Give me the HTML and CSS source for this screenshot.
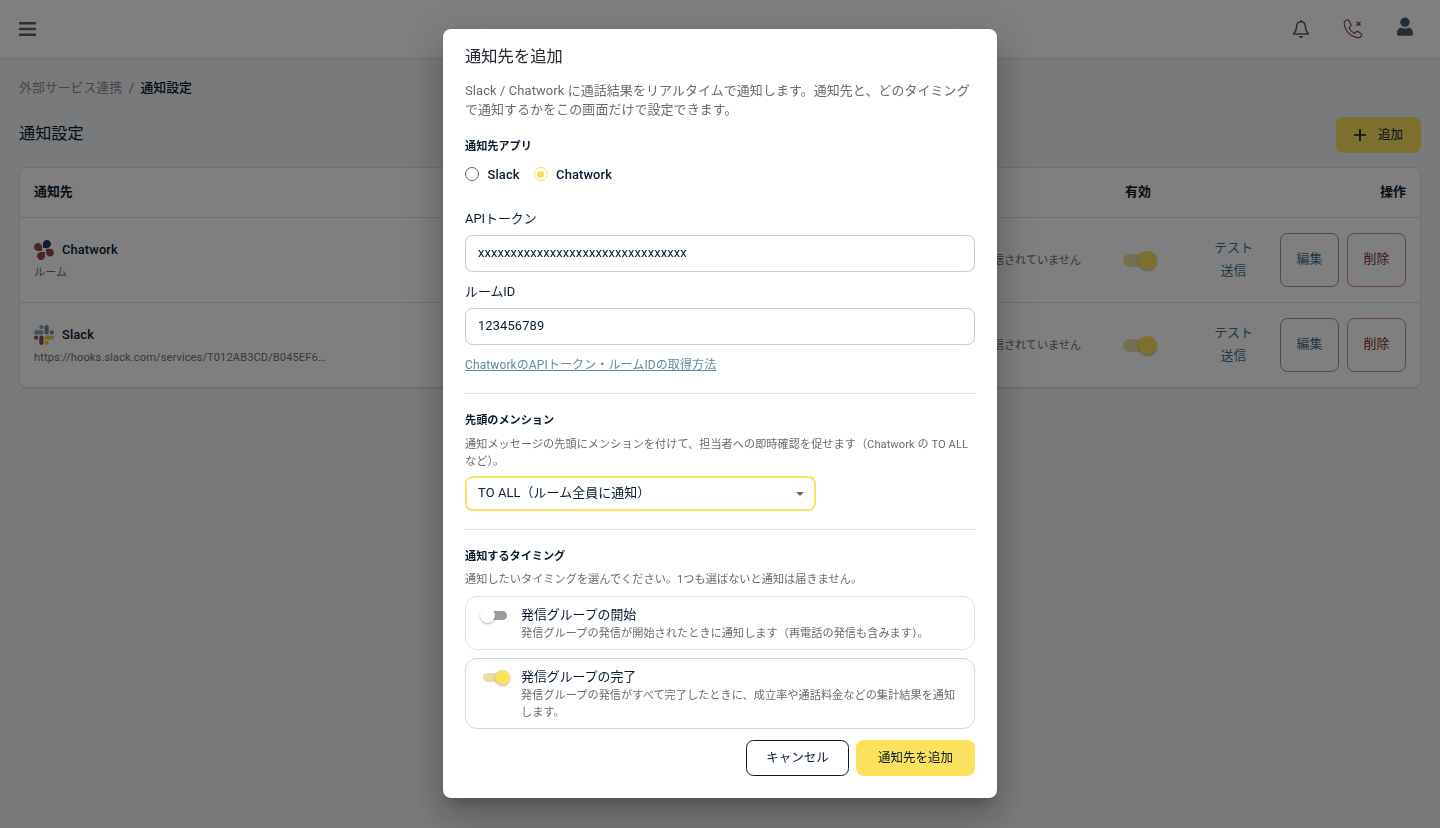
FILE: index.html
```html
<!DOCTYPE html>
<html lang="ja">
<head>
    <meta charset="UTF-8">
    <meta name="viewport" content="width=device-width, initial-scale=1.0">
    <title>通知設定</title>
    <link rel="stylesheet" href="styles.css">
</head>
<body>
    <header class="topbar">
        <svg class="menu-icon" width="17" height="14" viewBox="0 0 17 14" fill="#56646f"><rect y="0" width="17" height="2.4" rx=".6"/><rect y="5.8" width="17" height="2.4" rx=".6"/><rect y="11.6" width="17" height="2.4" rx=".6"/></svg>
        <div class="topbar-icons">
            <svg width="18" height="20" viewBox="0 0 18 20" fill="none" stroke="#56646f" stroke-width="1.600" stroke-linejoin="round"><path d="M9 1v1.600M9 2.700C6 2.700 4.600 4.900 4.600 7.800c0 3.700-1.200 5.200-3 7.200h14.800c-1.800-2-3-3.500-3-7.200C13.400 4.900 12 2.700 9 2.700z"/><path d="M6.700 17h4.600c-.3 1.200-1.200 1.900-2.300 1.900s-2-.7-2.300-1.900z" fill="#56646f" stroke="none"/></svg>
            <svg width="20" height="20" viewBox="0 0 20 20" fill="none" stroke="#8c4343" stroke-width="1.200" stroke-linejoin="round"><path d="M3.200 1.300C1.500 2 1 3.700 1.300 5.500c.9 6.300 5.800 11.700 12.300 13.100 1.900.4 3.700 0 4.700-1.500.5-.8.500-1.600-.2-2.200l-2.700-2.100c-.8-.6-1.700-.5-2.400.2l-1 1c-.4.4-.8.4-1.300.1-1.800-1.200-3.200-2.700-4.300-4.600-.3-.5-.2-.9.200-1.300l.9-.9c.6-.6.7-1.300.3-2.100L6.100 1.900c-.5-1-1.700-1.100-2.900-.6z"/><path d="M13.500 2.700l4 4M17.500 2.700l-4 4" stroke-width="1.500"/></svg>
            <svg class="user-icon" width="18" height="20" viewBox="0 0 18 20" fill="#4b5a69"><circle cx="9" cy="5.300" r="4.700"/><path d="M1 17c0-4.200 1.700-6.300 4.600-6.300 1 .6 2.200.9 3.400.9s2.400-.3 3.400-.9c2.900 0 4.600 2.100 4.600 6.300 0 1.100-.7 1.700-1.700 1.700H2.700C1.700 18.700 1 18.100 1 17z"/></svg>
        </div>
    </header>

    <main class="page">
        <nav class="breadcrumb"><span>外部サービス連携</span><span class="sep">/</span><span class="current">通知設定</span></nav>
        <div class="page-head">
            <h1>通知設定</h1>
            <button class="btn btn-add"><svg width="12" height="12" viewBox="0 0 12 12" stroke="#071a38" stroke-width="1.700"><path d="M6 0v12M0 6h12"/></svg>追加</button>
        </div>

        <section class="list">
            <div class="row row-head">
                <div>通知先</div>
                <div></div>
                <div class="cell-enabled">有効</div>
                <div class="cell-actions">操作</div>
            </div>
            <div class="row">
                <div>
                    <div class="app">
                        <svg width="20" height="20" viewBox="0 0 20 20" fill="#96484f"><path d="M8.900 4.200C8.900 1.800 10.600 0 12.900 0S17 1.800 17 4s-1.700 4-4 4H8.900z" fill="#1f3a5a"/><path d="M12 8.700h4c2.400 0 4 1.700 4 3.900s-1.700 4-3.900 4-4.100-1.800-4.100-4z"/><path d="M11 12v4c0 2.300-1.700 4-4 4s-3.900-1.700-3.900-4 1.800-4 4-4z"/><path d="M8 11H4c-2.300 0-4-1.700-4-3.900s1.700-4 4-4 4 1.800 4 4z"/></svg>
                        <span>Chatwork</span>
                    </div>
                    <div class="app-sub">ルーム</div>
                </div>
                <div class="cell-status">まだ送信されていません</div>
                <div class="cell-enabled"><span class="switch switch-lg on"></span></div>
                <div class="cell-actions">
                    <a class="test-link">テスト<br>送信</a>
                    <button class="btn btn-edit">編集</button>
                    <button class="btn btn-delete">削除</button>
                </div>
            </div>
            <div class="row">
                <div>
                    <div class="app">
                        <svg width="20" height="20" viewBox="0 0 20 20"><g fill="#7fa3ba"><circle cx="7.500" cy="2.200" r="2.100"/><rect x="0" y="5.300" width="9.600" height="4.200" rx="2.100"/></g><g fill="#7d8791"><rect x="10.500" y="0" width="4.200" height="9.500" rx="2.100"/><circle cx="17.900" cy="7.400" r="2.100"/></g><g fill="#e6cc4a"><rect x="10.500" y="10.600" width="9.500" height="4.200" rx="2.100"/><circle cx="12.600" cy="17.900" r="2.100"/></g><g fill="#914650"><circle cx="2.100" cy="12.700" r="2.100"/><rect x="5.300" y="10.600" width="4.200" height="9.400" rx="2.100"/></g></svg>
                        <span>Slack</span>
                    </div>
                    <div class="app-sub">https://hooks.slack.com/services/T012AB3CD/B045EF6…</div>
                </div>
                <div class="cell-status">まだ送信されていません</div>
                <div class="cell-enabled"><span class="switch switch-lg on"></span></div>
                <div class="cell-actions">
                    <a class="test-link">テスト<br>送信</a>
                    <button class="btn btn-edit">編集</button>
                    <button class="btn btn-delete">削除</button>
                </div>
            </div>
        </section>
    </main>

    <div class="overlay">
        <div class="modal">
            <h2>通知先を追加</h2>
            <p class="lead">Slack / Chatwork に通話結果をリアルタイムで通知します。通知先と、どのタイミングで通知するかをこの画面だけで設定できます。</p>

            <h3>通知先アプリ</h3>
            <div class="radios">
                <label><span class="radio"></span>Slack</label>
                <label><span class="radio checked"></span>Chatwork</label>
            </div>

            <label class="field-label">APIトークン</label>
            <div class="input">xxxxxxxxxxxxxxxxxxxxxxxxxxxxxxxx</div>
            <label class="field-label">ルームID</label>
            <div class="input">123456789</div>
            <a class="help-link">ChatworkのAPIトークン・ルームIDの取得方法</a>

            <hr>
            <h3>先頭のメンション</h3>
            <p class="hint">通知メッセージの先頭にメンションを付けて、担当者への即時確認を促せます（Chatwork の TO ALL など）。</p>
            <div class="select"><span>TO ALL（ルーム全員に通知）</span><span class="caret"></span></div>

            <hr>
            <h3>通知するタイミング</h3>
            <p class="hint">通知したいタイミングを選んでください。1つも選ばないと通知は届きません。</p>
            <div class="option">
                <span class="switch"></span>
                <div>
                    <div class="option-title">発信グループの開始</div>
                    <p class="hint">発信グループの発信が開始されたときに通知します（再電話の発信も含みます）。</p>
                </div>
            </div>
            <div class="option selected">
                <span class="switch on"></span>
                <div>
                    <div class="option-title">発信グループの完了</div>
                    <p class="hint">発信グループの発信がすべて完了したときに、成立率や通話料金などの集計結果を通知します。</p>
                </div>
            </div>

            <div class="modal-actions">
                <button class="btn btn-cancel">キャンセル</button>
                <button class="btn btn-primary">通知先を追加</button>
            </div>
        </div>
    </div>
</body>
</html>
```
FILE: styles.css
```css
* {
    box-sizing: border-box;
}

body {
    margin: 0;
    height: 828px;
    overflow: hidden;
    background: #f3f5f9;
    color: #071a30;
    font-family: Roboto, "Noto Sans CJK JP", sans-serif;
    font-size: 12.9px;
}

h1, h2, h3, p {
    margin: 0;
    font-weight: 400;
}

.btn {
    display: flex;
    align-items: center;
    justify-content: center;
    padding: 0 0 4px;
    border: 1px solid transparent;
    border-radius: 7.5px;
    background: #fff;
    color: #071a30;
    font: inherit;
}

/* header */
.topbar {
    display: flex;
    align-items: center;
    justify-content: space-between;
    height: 58px;
    padding: 0 26px 0 19px;
    background: #fff;
    box-shadow: 0 1px 2px rgba(0, 0, 0, 0.12);
}

.topbar-icons {
    display: flex;
    align-items: center;
    gap: 33px;
}

.user-icon {
    margin-bottom: 4px;
}

/* page */
.page {
    padding: 20px 19px 0;
}

.breadcrumb {
    display: flex;
    gap: 6.5px;
    line-height: 20px;
    color: #8b8b8b;
}

.breadcrumb .sep {
    color: #6b7480;
}

.breadcrumb .current {
    color: #071a30;
    font-weight: 500;
}

.page-head {
    display: flex;
    justify-content: space-between;
    align-items: center;
    height: 36px;
    margin: 19px 0 14px;
}

.page-head h1 {
    font-size: 16.2px;
    line-height: 24px;
    padding-bottom: 2px;
}

.btn-add {
    gap: 12px;
    width: 85px;
    height: 36px;
    background: #fbe15c;
    font-size: 12.5px;
}

.btn-add svg {
    margin-top: 3px;
}

/* list */
.list {
    border: 1px solid #e0e2e6;
    border-radius: 8px;
    background: #fff;
    box-shadow: 0 1px 1px rgba(0, 0, 0, 0.1);
}

.row {
    display: grid;
    grid-template-columns: 1fr 200px 60px 238px;
    align-items: center;
    height: 85px;
    padding: 0 14px;
}

.row + .row {
    border-top: 1px solid #dcdee2;
}

.row-head {
    height: 49px;
    padding-bottom: 4px;
    font-weight: 700;
}

.app {
    display: flex;
    align-items: center;
    gap: 8px;
    height: 20px;
    font-weight: 500;
    letter-spacing: 0.1px;
}

.app span {
    padding-bottom: 1px;
}

.app-sub {
    margin-top: 5px;
    font-size: 11.1px;
    line-height: 15px;
    letter-spacing: 0.1px;
    color: #6b6f76;
}

.cell-status {
    padding: 0 27px 3px 0;
    font-size: 11.1px;
    text-align: right;
    white-space: nowrap;
    color: #6b6f76;
}

.cell-enabled {
    display: flex;
    justify-content: center;
}

.cell-actions {
    display: flex;
    justify-content: flex-end;
    align-items: center;
    gap: 8px;
}

.test-link {
    width: 77px;
    padding-bottom: 2px;
    line-height: 23px;
    text-align: center;
    color: #41708f;
}

.btn-edit,
.btn-delete {
    width: 59px;
    height: 54px;
    padding-bottom: 5px;
}

.btn-edit {
    border-color: #709fbd;
    color: #41708f;
}

.btn-delete {
    border-color: #c98b7d;
    color: #7f2a2e;
}

/* switch */
.switch {
    position: relative;
    flex: none;
    width: 28px;
    height: 16px;
}

.switch::before {
    content: "";
    position: absolute;
    left: 0;
    top: 3px;
    width: 24px;
    height: 9px;
    border-radius: 5px;
    background: #9a9c9c;
}

.switch::after {
    content: "";
    position: absolute;
    left: -3px;
    top: 0;
    width: 15px;
    height: 15px;
    border-radius: 50%;
    background: #fff;
    box-shadow: 0 1px 2px rgba(0, 0, 0, 0.3);
}

.switch.on::before {
    background: #e9deaa;
}

.switch.on::after {
    left: 12px;
    background: #fbe15c;
}

.switch-lg {
    width: 34px;
    height: 19px;
    margin-left: 4px;
}

.switch-lg::before {
    left: 0;
    width: 31px;
    height: 13px;
    border-radius: 7px;
}

.switch-lg.on::after {
    left: 15px;
    width: 19px;
    height: 19px;
}

/* modal */
.overlay {
    position: fixed;
    inset: 0;
    display: flex;
    justify-content: center;
    align-items: center;
    padding-bottom: 1px;
    background: rgba(0, 0, 0, 0.5);
}

.modal {
    width: 554px;
    height: 769px;
    padding: 17.5px 22px 0;
    border-radius: 8px;
    background: #fff;
    box-shadow: 0 10px 14px -6px rgba(0, 0, 0, 0.2), 0 22px 35px 3px rgba(0, 0, 0, 0.14), 0 8px 42px 7px rgba(0, 0, 0, 0.12);
}

.modal h2 {
    font-size: 16.3px;
    line-height: 20px;
    color: #24282f;
}

.lead {
    margin-top: 14px;
    font-size: 12.95px;
    line-height: 19.4px;
    letter-spacing: 0.1px;
    color: #6b6b6b;
}

.modal h3 {
    font-size: 11.15px;
    font-weight: 700;
    line-height: 16px;
}

.lead + h3 {
    margin-top: 20px;
}

.radios {
    display: flex;
    gap: 14px;
    height: 20px;
    margin: 9px 0 25px;
    font-weight: 500;
    letter-spacing: 0.12px;
}

.radios label {
    display: flex;
    align-items: center;
    gap: 8.5px;
}

.radio {
    display: flex;
    align-items: center;
    justify-content: center;
    width: 14px;
    height: 14px;
    border: 1.5px solid #666;
    border-radius: 50%;
}

.radio.checked {
    border-color: #fbe15c;
}

.radio.checked::after {
    content: "";
    width: 7px;
    height: 7px;
    border-radius: 50%;
    background: #fbe15c;
}

.field-label {
    display: block;
    height: 20px;
    margin-bottom: 6px;
    line-height: 20px;
}

.input {
    height: 37px;
    margin-bottom: 10px;
    padding: 0 12px;
    border: 1px solid #c8c8c8;
    border-radius: 7.5px;
    line-height: 34px;
    letter-spacing: 0.13px;
}

.help-link {
    display: block;
    width: fit-content;
    font-size: 12px;
    line-height: 21px;
    letter-spacing: 0.11px;
    color: #5c8aa5;
    text-decoration: underline;
}

.modal hr {
    height: 1px;
    margin: 18px 0 19px;
    border: 0;
    background: #e2e2e2;
}

.help-link + hr {
    margin-top: 17px;
}

.hint {
    font-size: 11.15px;
    line-height: 16.7px;
    letter-spacing: 0.05px;
    color: #6b6b6b;
}

h3 + .hint {
    margin-top: 7.5px;
}

.select {
    display: flex;
    justify-content: space-between;
    align-items: center;
    width: 351px;
    height: 35px;
    margin-top: 5.5px;
    padding: 0 10px 3px 11px;
    border: 2px solid #fbe15c;
    border-radius: 7.5px;
    letter-spacing: 0.12px;
}

.caret {
    margin-top: 4px;
    border: 4.5px solid transparent;
    border-top-color: #6b6b6b;
    border-bottom: 0;
}

.option {
    display: flex;
    gap: 10px;
    height: 54px;
    margin-top: 8px;
    padding: 8px 15px 0 17px;
    border: 1px solid #e2e2e2;
    border-radius: 12px;
}

.hint + .option {
    margin-top: 7px;
}

.option.selected {
    height: 71px;
    border-color: #cfd8e6;
}

.option .switch {
    margin-top: 3px;
}

.option .hint {
    margin-top: 1px;
}

.option-title {
    line-height: 20px;
}

.modal-actions {
    display: flex;
    justify-content: flex-end;
    gap: 7px;
    margin-top: 11px;
}

.modal-actions .btn {
    height: 36px;
    padding-bottom: 3px;
    font-size: 12.5px;
}

.btn-cancel {
    width: 103px;
    border-color: #071a30;
}

.modal-actions .btn-primary {
    width: 119px;
    background: #fbe15c;
}
```
